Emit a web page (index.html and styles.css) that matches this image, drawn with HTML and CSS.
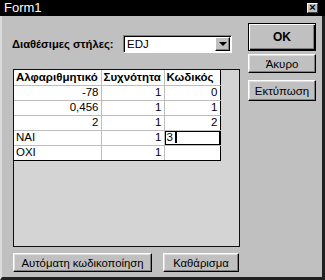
FILE: index.html
```html
<!DOCTYPE html>
<html>
<head>
<meta charset="utf-8">
<link rel="stylesheet" href="styles.css">
</head>
<body>
<div class="window">
  <div class="titlebar">
    <span class="title">Form1</span>
    <span class="close">×</span>
  </div>
  <div class="client">
    <div class="leftcol">
      <div class="toprow">
        <span class="label">Διαθέσιμες στήλες:</span>
        <div class="combo">
          <span class="combo-text">EDJ</span>
          <span class="combo-btn"><span class="arrow"></span></span>
        </div>
      </div>
      <div class="panel">
        <table class="grid">
          <colgroup><col class="c1"><col class="c2"><col class="c3"></colgroup>
          <tr class="head"><td>Αλφαριθμητικό</td><td>Συχνότητα</td><td>Κωδικός</td></tr>
          <tr><td class="r">-78</td><td class="r">1</td><td class="r">0</td></tr>
          <tr><td class="r">0,456</td><td class="r">1</td><td class="r">1</td></tr>
          <tr><td class="r">2</td><td class="r">1</td><td class="r">2</td></tr>
          <tr><td>NAI</td><td class="r">1</td><td class="edit"><span class="edit-box">3<span class="caret"></span></span></td></tr>
          <tr class="last"><td>OXI</td><td class="r">1</td><td></td></tr>
        </table>
      </div>
      <div class="bottomrow">
        <button class="btn auto">Αυτόματη κωδικοποίηση</button>
        <button class="btn clear">Καθάρισμα</button>
      </div>
    </div>
    <div class="rightcol">
      <button class="btn ok">OK</button>
      <button class="btn cancel">Άκυρο</button>
      <button class="btn print">Εκτύπωση</button>
    </div>
  </div>
</div>
</body>
</html>
```
FILE: styles.css
```css
* { box-sizing: border-box; }
html, body { margin: 0; padding: 0; background: #c0c0c0; }
body { font-family: "Liberation Sans", Arial, sans-serif; font-size: 11px; color: #000; }

.window {
  width: 325px;
  height: 280px;
  background: #c0c0c0;
  border-left: 2px solid #dcdcdc;
  border-right: 3px solid #202020;
  border-bottom: 3px solid #202020;
  display: flex;
  flex-direction: column;
}

.titlebar {
  height: 16px;
  margin-left: -2px;
  margin-right: -3px;
  background: #000;
  display: flex;
  align-items: center;
  justify-content: space-between;
  padding: 0 7px 0 4px;
}
.title { color: #fff; font-size: 13px; line-height: 14px; }
.close {
  width: 11px;
  height: 10px;
  background: #c0c0c0;
  border: 1px solid;
  border-color: #fff #404040 #404040 #fff;
  font-size: 11px;
  font-weight: bold;
  line-height: 7px;
  text-align: center;
  color: #000;
}

.client { display: flex; flex: 1; }

.leftcol {
  width: 238px;
  padding-left: 11px;
  display: flex;
  flex-direction: column;
}

.toprow {
  display: flex;
  align-items: center;
  margin-top: 19px;
  height: 18px;
}
.label { font-weight: bold; font-size: 11.2px; width: 111px; margin-left: -1px; white-space: nowrap; }
.combo {
  width: 109px;
  height: 18px;
  background: #fff;
  border: 1px solid;
  border-color: #808080 #fff #fff #808080;
  box-shadow: inset 1px 1px #000;
  display: flex;
  align-items: center;
  justify-content: space-between;
  padding: 1px 1px 1px 3px;
}
.combo-text { font-size: 11.5px; }
.combo-btn {
  width: 15px;
  height: 14px;
  background: #c0c0c0;
  border: 1px solid;
  border-color: #fff #000 #000 #fff;
  box-shadow: inset -1px -1px #808080;
  display: flex;
  align-items: center;
  justify-content: center;
}
.arrow {
  width: 0; height: 0;
  border-left: 4px solid transparent;
  border-right: 4px solid transparent;
  border-top: 4px solid #000;
}

.panel {
  margin-top: 16px;
  width: 227px;
  height: 178px;
  background: #d4d4d4;
  border: 1px solid #101010;
}

.grid {
  border-collapse: collapse;
  table-layout: fixed;
  width: 206px;
  background: #fff;
}
.c1 { width: 87px; }
.c2 { width: 63px; }
.c3 { width: 56px; }
.grid td {
  height: 15px;
  padding: 0 2px;
  border-right: 1px solid #bdbdbd;
  border-bottom: 1px solid #bdbdbd;
  font-size: 11.5px;
  line-height: 13px;
  white-space: nowrap;
  overflow: hidden;
}
.grid td:last-child { border-right: 1px solid #000; }
.grid tr.last td { border-bottom: 1px solid #000; }
.grid .head td { font-weight: bold; font-size: 11.5px; }
.grid td.r { text-align: right; }
.grid td.edit { padding: 0; position: relative; }
.edit-box {
  position: absolute;
  left: -1px; top: -1px; right: -1px; bottom: -1px;
  border: 2px solid #000;
  padding-left: 1px;
  display: flex;
  align-items: center;
  line-height: 11px;
}
.caret { display: inline-block; width: 2px; height: 11px; background: #000; margin-left: 2px; }

.bottomrow {
  display: flex;
  gap: 11px;
  margin-top: 6px;
}

.btn {
  font-family: "Liberation Sans", Arial, sans-serif;
  font-size: 11px;
  color: #000;
  background: #c0c0c0;
  border: 1px solid;
  border-color: #fff #000 #000 #fff;
  box-shadow: inset -1px -1px #808080, inset 1px 1px #dfdfdf;
  padding: 0;
  margin: 0;
}
.auto { width: 139px; height: 19px; font-size: 11.3px; }
.clear { width: 76px; height: 19px; font-size: 11.3px; }

.rightcol {
  margin-left: 8px;
  padding-top: 7px;
  display: flex;
  flex-direction: column;
  width: 68px;
}
.ok {
  height: 28px;
  font-weight: bold;
  font-size: 12px;
  border: 1px solid #000;
  box-shadow: inset 1px 1px #fff, inset -1px -1px #000, inset -2px -2px #808080;
}
.cancel { height: 19px; margin-top: 3px; font-size: 11.5px; }
.print { height: 21px; margin-top: 7px; font-size: 11.5px; }
```
